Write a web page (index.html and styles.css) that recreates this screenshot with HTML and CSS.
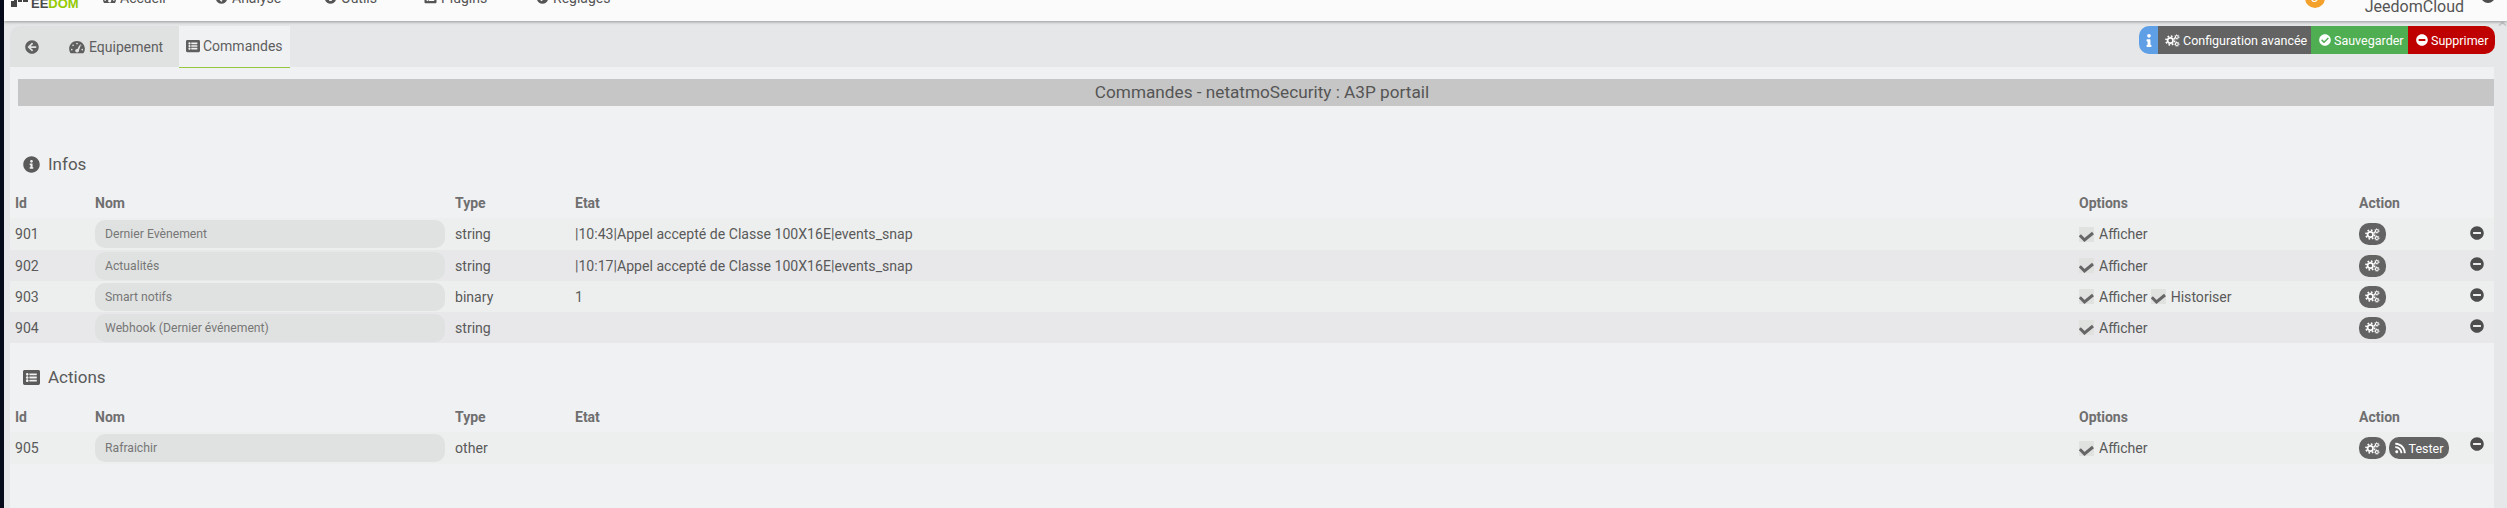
FILE: index.html
```html
<!DOCTYPE html>
<html lang="fr">
<head>
<meta charset="utf-8">
<title>Commandes - netatmoSecurity</title>
<link rel="stylesheet" href="styles.css">
</head>
<body>
<svg class="defs" width="0" height="0" aria-hidden="true">
  <symbol id="i-left" viewBox="0 0 512 512"><path d="M256 504C119 504 8 393 8 256S119 8 256 8s248 111 248 248-111 248-248 248zm28.9-143.6L209.4 288H392c13.3 0 24-10.7 24-24v-16c0-13.3-10.7-24-24-24H209.4l75.5-72.4c9.7-9.3 9.9-24.8.4-34.3l-11-10.9c-9.4-9.4-24.6-9.4-33.9 0L107.7 239c-9.4 9.4-9.4 24.6 0 33.9l132.7 132.7c9.4 9.4 24.6 9.4 33.9 0l11-10.9c9.5-9.5 9.3-25-.4-34.3z"/></symbol>
  <symbol id="i-info" viewBox="0 0 512 512"><path d="M256 8C119.043 8 8 119.083 8 256c0 136.997 111.043 248 248 248s248-111.003 248-248C504 119.083 392.957 8 256 8zm0 110c23.196 0 42 18.804 42 42s-18.804 42-42 42-42-18.804-42-42 18.804-42 42-42zm56 254c0 6.627-5.373 12-12 12h-88c-6.627 0-12-5.373-12-12v-24c0-6.627 5.373-12 12-12h12v-64h-12c-6.627 0-12-5.373-12-12v-24c0-6.627 5.373-12 12-12h64c6.627 0 12 5.373 12 12v100h12c6.627 0 12 5.373 12 12v24z"/></symbol>
  <symbol id="i-i" viewBox="0 0 192 512"><path d="M20 424h20V296H20c-11 0-20-9-20-20v-48c0-11 9-20 20-20h112c11 0 20 9 20 20v196h20c11 0 20 9 20 20v48c0 11-9 20-20 20H20c-11 0-20-9-20-20v-48c0-11 9-20 20-20zM96 0c40 0 72 32 72 72s-32 72-72 72-72-32-72-72S56 0 96 0z"/></symbol>
  <symbol id="i-list" viewBox="0 0 512 512"><path d="M464 480H48c-26.500 0-48-21.500-48-48V80c0-26.500 21.500-48 48-48h416c26.500 0 48 21.500 48 48v352c0 26.500-21.500 48-48 48zM128 120c-22 0-40 18-40 40s18 40 40 40 40-18 40-40-18-40-40-40zm0 96c-22 0-40 18-40 40s18 40 40 40 40-18 40-40-18-40-40-40zm0 96c-22 0-40 18-40 40s18 40 40 40 40-18 40-40-18-40-40-40zm288-136v-32c0-6.600-5.400-12-12-12H204c-6.600 0-12 5.400-12 12v32c0 6.600 5.400 12 12 12h200c6.600 0 12-5.400 12-12zm0 96v-32c0-6.600-5.400-12-12-12H204c-6.600 0-12 5.400-12 12v32c0 6.600 5.400 12 12 12h200c6.600 0 12-5.400 12-12zm0 96v-32c0-6.600-5.400-12-12-12H204c-6.600 0-12 5.400-12 12v32c0 6.600 5.400 12 12 12h200c6.600 0 12-5.400 12-12z"/></symbol>
  <symbol id="i-check" viewBox="0 0 512 512"><path d="M504 256c0 136.967-111.033 248-248 248S8 392.967 8 256 119.033 8 256 8s248 111.033 248 248zM227.314 387.314l184-184c6.248-6.248 6.248-16.379 0-22.627l-22.627-22.627c-6.248-6.249-16.379-6.249-22.628 0L216 308.118l-70.059-70.059c-6.248-6.248-16.379-6.248-22.628 0l-22.627 22.627c-6.248 6.248-6.248 16.379 0 22.627l104 104c6.249 6.249 16.379 6.249 22.628.001z"/></symbol>
  <symbol id="i-minus" viewBox="0 0 512 512"><path d="M256 8C119 8 8 119 8 256s111 248 248 248 248-111 248-248S393 8 256 8zM124 296c-6.600 0-12-5.400-12-12v-56c0-6.600 5.400-12 12-12h264c6.600 0 12 5.400 12 12v56c0 6.600-5.400 12-12 12H124z"/></symbol>
  <symbol id="i-rss" viewBox="0 0 448 512"><path d="M128.081 415.959c0 35.369-28.672 64.041-64.041 64.041S0 451.328 0 415.959s28.672-64.041 64.041-64.041 64.04 28.673 64.04 64.041zm175.66 47.25c-8.354-154.6-132.185-278.587-286.95-286.95C7.656 175.765 0 183.105 0 192.253v48.069c0 8.415 6.49 15.472 14.887 16.018 111.832 7.284 201.473 96.702 208.772 208.772.547 8.397 7.604 14.887 16.018 14.887h48.069c9.149.001 16.489-7.655 15.995-16.79zm144.249.288C439.596 229.677 251.465 40.445 16.503 32.01 7.473 31.686 0 38.981 0 48.016v48.068c0 8.625 6.835 15.645 15.453 15.999 191.179 7.839 344.627 161.316 352.465 352.465.353 8.618 7.373 15.453 15.999 15.453h48.068c9.034-.001 16.329-7.474 16.005-16.504z"/></symbol>
  <symbol id="i-gauge" viewBox="0 0 576 512"><path d="M288 32C129 32 0 161 0 320c0 53 14 102 39 145 6 9 16 15 28 15h442c12 0 22-6 28-15 25-43 39-92 39-145C576 161 447 32 288 32zm0 64c18 0 32 14 32 32 0 1 0 2-1 3l-10 30c-6-2-13-3-21-3-8 0-15 1-21 3l-10-30c-1-1-1-2-1-3 0-18 14-32 32-32zM96 384c-18 0-32-14-32-32s14-32 32-32 32 14 32 32-14 32-32 32zm48-160c-18 0-32-14-32-32s14-32 32-32 32 14 32 32-14 32-32 32zm201 207c-10 15-30 27-57 27-35 0-64-29-64-64s29-64 64-64c6 0 11 1 16 2l68-132c6-12 20-17 32-12 13 5 19 20 14 33l-56 142c9 20 0 48-17 68zm71-207c-18 0-32-14-32-32s14-32 32-32 32 14 32 32-14 32-32 32zm64 160c-18 0-32-14-32-32s14-32 32-32 32 14 32 32-14 32-32 32z"/></symbol>
  <symbol id="i-cogs" viewBox="0 0 24 20">
    <circle cx="8.500" cy="10" r="4.300" fill="none" stroke="currentColor" stroke-width="2.700"/>
    <circle cx="8.500" cy="10" r="7" fill="none" stroke="currentColor" stroke-width="2.600" stroke-dasharray="2.750 2.750"/>
    <circle cx="19" cy="4.300" r="2.300" fill="none" stroke="currentColor" stroke-width="1.700"/>
    <circle cx="19" cy="4.300" r="3.800" fill="none" stroke="currentColor" stroke-width="1.100" stroke-dasharray="1.500 1.480"/>
    <circle cx="19" cy="15.700" r="2.300" fill="none" stroke="currentColor" stroke-width="1.700"/>
    <circle cx="19" cy="15.700" r="3.800" fill="none" stroke="currentColor" stroke-width="1.100" stroke-dasharray="1.500 1.480"/>
  </symbol>
  <symbol id="i-tick" viewBox="0 0 15 15"><path d="M.8 8.200 5.500 13 14 6" fill="none" stroke="currentColor" stroke-width="3"/></symbol>
</svg>

<div class="edge"></div>
<div class="page">
  <header class="navbar">
    <div class="nav-left">
      <div class="logo"><svg class="logo-mark" viewBox="0 0 17 9"><path d="M0 3h6v6H0zM7 2h4v2H7zM12 2h5v2h-5zM3 0h3v3H3z"/></svg><span class="logo-a">EE</span><span class="logo-b">DOM</span></div>
      <nav class="nav-items">
        <a class="nav-item"><svg class="nav-ic"><use href="#i-gauge"/></svg>Accueil</a>
        <a class="nav-item"><svg class="nav-ic"><use href="#i-left"/></svg>Analyse</a>
        <a class="nav-item"><svg class="nav-ic"><use href="#i-info"/></svg>Outils</a>
        <a class="nav-item"><svg class="nav-ic"><use href="#i-list"/></svg>Plugins</a>
        <a class="nav-item"><svg class="nav-ic"><use href="#i-check"/></svg>Réglages</a>
      </nav>
    </div>
    <div class="nav-right">
      <span class="badge">3</span>
      <span class="user">JeedomCloud</span>
      <span class="user-dot"></span>
    </div>
  </header>

  <div class="main">
    <div class="tabs-row">
      <div class="tabs">
        <a class="tab tab-back"><svg class="ic14"><use href="#i-left"/></svg></a>
        <a class="tab tab-equip"><svg class="ic-gauge"><use href="#i-gauge"/></svg>Equipement</a>
        <a class="tab tab-active"><svg class="ic-list"><use href="#i-list"/></svg>Commandes</a>
      </div>
      <div class="actions-bar">
        <a class="ab ab-info"><svg class="ic-i"><use href="#i-i"/></svg></a>
        <a class="ab ab-conf"><svg class="ic-cogs"><use href="#i-cogs"/></svg>Configuration avancée</a>
        <a class="ab ab-save"><svg class="ic13"><use href="#i-check"/></svg>Sauvegarder</a>
        <a class="ab ab-del"><svg class="ic13"><use href="#i-minus"/></svg>Supprimer</a>
      </div>
    </div>

    <section class="panel">
      <div class="title">Commandes - netatmoSecurity : A3P portail</div>

      <h3 class="section section-infos"><svg class="ic-sec"><use href="#i-info"/></svg>Infos</h3>
      <table class="cmds">
        <colgroup><col class="c-id"><col class="c-nom"><col class="c-type"><col class="c-etat"><col class="c-opt"><col class="c-act"><col class="c-del"></colgroup>
        <thead><tr><th>Id</th><th>Nom</th><th>Type</th><th>Etat</th><th>Options</th><th>Action</th><th></th></tr></thead>
        <tbody>
          <tr><td>901</td><td><input class="name" placeholder="Dernier Evènement"></td><td>string</td><td>|10:43|Appel accepté de Classe 100X16E|events_snap</td>
            <td><label class="opt"><span class="box"><svg class="tick"><use href="#i-tick"/></svg></span>Afficher</label></td>
            <td><a class="pill"><svg class="ic-cogs"><use href="#i-cogs"/></svg></a></td><td><svg class="del"><use href="#i-minus"/></svg></td></tr>
          <tr><td>902</td><td><input class="name" placeholder="Actualités"></td><td>string</td><td>|10:17|Appel accepté de Classe 100X16E|events_snap</td>
            <td><label class="opt"><span class="box"><svg class="tick"><use href="#i-tick"/></svg></span>Afficher</label></td>
            <td><a class="pill"><svg class="ic-cogs"><use href="#i-cogs"/></svg></a></td><td><svg class="del"><use href="#i-minus"/></svg></td></tr>
          <tr><td>903</td><td><input class="name" placeholder="Smart notifs"></td><td>binary</td><td>1</td>
            <td><label class="opt"><span class="box"><svg class="tick"><use href="#i-tick"/></svg></span>Afficher</label><label class="opt opt-next"><span class="box"><svg class="tick"><use href="#i-tick"/></svg></span>Historiser</label></td>
            <td><a class="pill"><svg class="ic-cogs"><use href="#i-cogs"/></svg></a></td><td><svg class="del"><use href="#i-minus"/></svg></td></tr>
          <tr><td>904</td><td><input class="name" placeholder="Webhook (Dernier événement)"></td><td>string</td><td></td>
            <td><label class="opt"><span class="box"><svg class="tick"><use href="#i-tick"/></svg></span>Afficher</label></td>
            <td><a class="pill"><svg class="ic-cogs"><use href="#i-cogs"/></svg></a></td><td><svg class="del"><use href="#i-minus"/></svg></td></tr>
        </tbody>
      </table>

      <h3 class="section section-actions"><svg class="ic-sec"><use href="#i-list"/></svg>Actions</h3>
      <table class="cmds">
        <colgroup><col class="c-id"><col class="c-nom"><col class="c-type"><col class="c-etat"><col class="c-opt"><col class="c-act"><col class="c-del"></colgroup>
        <thead><tr><th>Id</th><th>Nom</th><th>Type</th><th>Etat</th><th>Options</th><th>Action</th><th></th></tr></thead>
        <tbody>
          <tr><td>905</td><td><input class="name" placeholder="Rafraichir"></td><td>other</td><td></td>
            <td><label class="opt"><span class="box"><svg class="tick"><use href="#i-tick"/></svg></span>Afficher</label></td>
            <td><a class="pill"><svg class="ic-cogs"><use href="#i-cogs"/></svg></a><a class="pill pill-test"><svg class="ic-rss"><use href="#i-rss"/></svg>Tester</a></td><td><svg class="del del-up"><use href="#i-minus"/></svg></td></tr>
        </tbody>
      </table>
    </section>
  </div>
</div>
<svg class="scroll-caret" viewBox="0 0 10 6"><path d="M1 5 5 1.500 9 5" fill="none" stroke="#c4c4c4" stroke-width="1.500"/></svg>
</body>
</html>
```

FILE: styles.css
```css
* { box-sizing: border-box; }
html, body { margin: 0; height: 100%; overflow: hidden; }
body {
  display: flex;
  background: #e6e7e8;
  color: #5a5a5a;
  font-family: Roboto, "Liberation Sans", sans-serif;
  font-size: 14px;
}
svg { fill: currentColor; }
.defs { position: absolute; }
a { color: inherit; text-decoration: none; }

.edge { width: 4px; flex: none; background: #060b1c; }
.page { flex: 1; min-width: 0; display: flex; flex-direction: column; }

/* top navigation, clipped by the top of the frame */
.navbar {
  height: 21px;
  flex: none;
  background: #fbfbfb;
  box-shadow: 0 1px 3px rgba(0, 0, 0, .35);
  display: flex;
  justify-content: space-between;
  overflow: hidden;
  position: relative;
  z-index: 2;
}
.nav-left { display: flex; align-items: flex-end; height: 8px; }
.logo { display: flex; align-items: flex-end; padding-left: 7px; width: 99px; font: bold 13px/15px "Liberation Sans", sans-serif; flex: none; margin-bottom: -3px; }
.logo-mark { width: 17px; height: 9px; fill: #444; margin-right: 3px; margin-bottom: 4px; flex: none; }
.logo-a { color: #4a4a4a; }
.logo-b { color: #94ca02; }
.nav-items { display: flex; align-items: flex-end; margin-bottom: 2px; }
.nav-item { display: flex; align-items: center; font-size: 14px; line-height: 16px; color: #555; white-space: nowrap; }
.nav-item:nth-child(1) { width: 112px; }
.nav-item:nth-child(2) { width: 109px; }
.nav-item:nth-child(3) { width: 100px; }
.nav-item:nth-child(4) { width: 112px; }
.nav-ic { width: 13px; height: 12px; margin-right: 4px; }
.nav-right { display: flex; align-items: flex-start; padding-right: 12px; }
.badge {
  width: 20px; height: 20px; margin-top: -12px; margin-right: 40px;
  border-radius: 50%;
  background: #f3a12b; color: #fff;
  font-size: 13px; line-height: 20px; text-align: center;
}
.user { font-size: 16px; line-height: 19px; margin-top: -3px; color: #555; margin-right: 17px; }
.user-dot { width: 14px; height: 14px; margin-top: -11px; border-radius: 50%; background: #4d4d4d; }

/* main area */
.main { flex: 1; padding: 5px 13px 0 6px; display: flex; flex-direction: column; min-height: 0; }
.tabs-row { display: flex; justify-content: space-between; align-items: flex-start; height: 41px; margin-right: -1px; flex: none; }
.tabs { display: flex; height: 42px; position: relative; z-index: 1; }
.tab { display: flex; align-items: center; height: 41px; font-size: 14px; color: #5f5f5f; background: #e0e1e1; white-space: nowrap; }
.tab-back { width: 44px; padding-left: 15px; border-top-left-radius: 10px; }
.ic14 { width: 14px; height: 14px; }
.tab-equip { width: 125px; padding-left: 15px; }
.ic-gauge { width: 16px; height: 14px; margin-right: 4px; }
.tab-active { width: 111px; height: 42px; padding: 0 0 1px 7px; background: #f0f1f3; border-bottom: 1px solid #94c73d; }
.ic-list { width: 14px; height: 14px; margin-right: 3px; }

.actions-bar { display: flex; height: 28px; color: #fff; font-size: 12.500px; }
.ab { display: flex; align-items: center; white-space: nowrap; }
.ab-info { width: 19px; background: #5f9fe6; justify-content: center; border-radius: 10px 0 0 10px; }
.ic-i { width: 6px; height: 13px; }
.ab-conf { width: 153px; padding-left: 7px; background: #636363; }
.ab-save { width: 97px; padding-left: 8px; background: #4fad52; }
.ab-del { width: 87px; padding-left: 8px; background: #bf0000; border-radius: 0 10px 10px 0; }
.ic-cogs { width: 15px; height: 13px; margin-right: 3px; flex: none; }
.ic13 { width: 12px; height: 12px; margin-right: 3px; flex: none; }

.panel { flex: 1; min-height: 0; background: #f0f1f3; padding: 12px 0 0; }
.title {
  margin-left: 8px;
  padding-left: 12px;
  height: 27px;
  background: #c6c6c6;
  color: #555;
  font-size: 17.200px;
  line-height: 27px;
  text-align: center;
}
.section { display: flex; align-items: center; margin: 0; font-size: 17px; font-weight: 400; color: #5a5a5a; height: 20px; padding-left: 13px; }
.section-infos { margin-top: 48px; margin-bottom: 14px; }
.section-actions { margin-top: 24px; margin-bottom: 15px; }
.ic-sec { width: 17px; height: 17px; margin-right: 8px; }

.cmds { width: 100%; border-collapse: collapse; table-layout: fixed; }
.c-id { width: 80px; }
.c-nom { width: 360px; }
.c-type { width: 120px; }
.c-etat { width: 1504px; }
.c-opt { width: 280px; }
.c-act { width: 105px; }
.cmds th { height: 30px; padding: 0 5px; text-align: left; font-size: 14px; font-weight: 700; color: #6f6f6f; }
.cmds td { height: 31px; padding: 0 5px; color: #5a5a5a; font-size: 14.100px; white-space: nowrap; }
.cmds tbody tr:first-child td { height: 32px; }
.cmds tbody tr:nth-child(odd) { background: #edefee; }
.cmds tbody tr:nth-child(even) { background: #e8e8ea; }

.name {
  display: block;
  width: 100%;
  height: 28px;
  padding: 0 10px;
  border: 0;
  border-radius: 10px;
  background: #e0e2e1;
  font: 12.200px Roboto, sans-serif;
  outline: 0;
}
.name::placeholder { color: #777; opacity: 1; }

.opt { display: inline-flex; align-items: center; vertical-align: middle; margin-top: -2px; }
.opt-next { margin-left: 3px; }
.box { width: 15px; height: 15px; margin-right: 5px; background: #e0e2e0; color: #666; display: block; }
.tick { display: block; width: 15px; height: 15px; }

.pill {
  display: inline-flex;
  vertical-align: middle;
  align-items: center;
  justify-content: center;
  width: 27px;
  height: 22px;
  border-radius: 10px;
  background: #636363;
  color: #fff;
  font-size: 12.500px;
}
.pill .ic-cogs { margin: 0; }
.pill-test { width: 60px; margin-left: 3px; }
.ic-rss { width: 11px; height: 12px; margin-right: 3px; }
.del { display: block; width: 14px; height: 14px; margin: -3px 0 0 6px; color: #4d4d4d; }
.del-up { margin-top: -8px; }

.scroll-caret { position: absolute; top: 21px; right: 0; width: 9px; height: 6px; }
```
